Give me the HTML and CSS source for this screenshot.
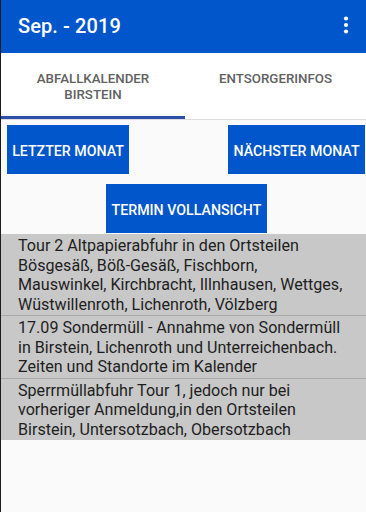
FILE: index.html
```html
<!DOCTYPE html>
<html lang="de">
<head>
<meta charset="utf-8">
<title>Abfallkalender Birstein</title>
<link rel="stylesheet" href="styles.css">
</head>
<body>
<div class="app">
  <header class="appbar">
    <h1 class="title">Sep. - 2019</h1>
    <svg class="kebab" width="8" height="20" viewBox="0 0 8 20" aria-hidden="true">
      <circle cx="4" cy="3.5" r="2.1" fill="#fff"/>
      <circle cx="4" cy="10" r="2.1" fill="#fff"/>
      <circle cx="4" cy="16.5" r="2.1" fill="#fff"/>
    </svg>
  </header>
  <nav class="tabs">
    <div class="tab active">ABFALLKALENDER<br>BIRSTEIN</div>
    <div class="tab">ENTSORGERINFOS</div>
  </nav>
  <main class="content">
    <div class="row row-split">
      <button class="btn btn-prev">LETZTER MONAT</button>
      <button class="btn btn-next">NÄCHSTER MONAT</button>
    </div>
    <div class="row row-center">
      <button class="btn btn-full">TERMIN VOLLANSICHT</button>
    </div>
    <ul class="list">
      <li class="item">Tour 2 Altpapierabfuhr in den Ortsteilen Bösgesäß, Böß-Gesäß, Fischborn, Mauswinkel, Kirchbracht, Illnhausen, Wettges, Wüstwillenroth, Lichenroth, Völzberg</li>
      <li class="item">17.09 Sondermüll - Annahme von Sondermüll in Birstein, Lichenroth und Unterreichenbach. Zeiten und Standorte im Kalender</li>
      <li class="item">Sperrmüllabfuhr Tour 1, jedoch nur bei vorheriger Anmeldung,in den Ortsteilen Birstein, Untersotzbach, Obersotzbach</li>
    </ul>
  </main>
</div>
</body>
</html>
```
FILE: styles.css
```css
html, body {
  margin: 0;
  padding: 0;
}
body {
  width: 366px;
  height: 512px;
  overflow: hidden;
  background: #fafafa;
  font-family: Roboto, "Liberation Sans", sans-serif;
  box-sizing: border-box;
  border-left: 1px solid #1c1c1c;
}
.app {
  display: flex;
  flex-direction: column;
  height: 512px;
}
.appbar {
  height: 53px;
  background: #0256cc;
  display: flex;
  align-items: center;
  justify-content: space-between;
  padding: 0 16px 0 17px;
  box-sizing: border-box;
}
.title {
  margin: 0;
  color: #fff;
  font-size: 20px;
  font-weight: 500;
  letter-spacing: 0.1px;
  padding-bottom: 1px;
}
.kebab {
  display: block;
  margin-bottom: 3px;
}
.tabs {
  display: flex;
  background: #fff;
  height: 67px;
  border-bottom: 1px solid #dcdcdc;
  box-sizing: border-box;
}
.tab {
  flex: 0 0 184px;
  box-sizing: border-box;
  text-align: center;
  color: #616161;
  font-size: 13.3px;
  font-weight: 500;
  line-height: 16px;
  padding-top: 18px;
  border-bottom: 3px solid transparent;
}
.tab + .tab {
  flex: 1 1 auto;
  padding-top: 18px;
}
.tab.active {
  border-bottom-color: #2f4ea8;
}
.content {
  flex: 1 1 auto;
  display: flex;
  flex-direction: column;
  padding-top: 5px;
}
.row {
  display: flex;
}
.row-split {
  justify-content: space-between;
  padding: 0 1px 0 6px;
}
.row-center {
  justify-content: center;
  padding-left: 6px;
  margin-top: 10px;
}
.btn {
  border: 0;
  margin: 0;
  background: #0256cc;
  color: #fff;
  font-family: Roboto, "Liberation Sans", sans-serif;
  font-size: 14.2px;
  font-weight: 500;
  height: 49px;
  padding: 2px 0 0 0;
  box-sizing: border-box;
  text-align: center;
  white-space: nowrap;
}
.btn-prev { width: 122px; }
.btn-next { width: 137px; }
.btn-full { width: 161px; }
.list {
  list-style: none;
  margin: 1px 0 0 0;
  padding: 0;
}
.item {
  background: #c8c8c8;
  color: #1e1e1e;
  font-size: 16.1px;
  line-height: 19.5px;
  padding: 2px 20px 1px 17px;
  border-bottom: 1px solid #a9a9a9;
}
.item:last-child {
  border-bottom: 0;
}
```
